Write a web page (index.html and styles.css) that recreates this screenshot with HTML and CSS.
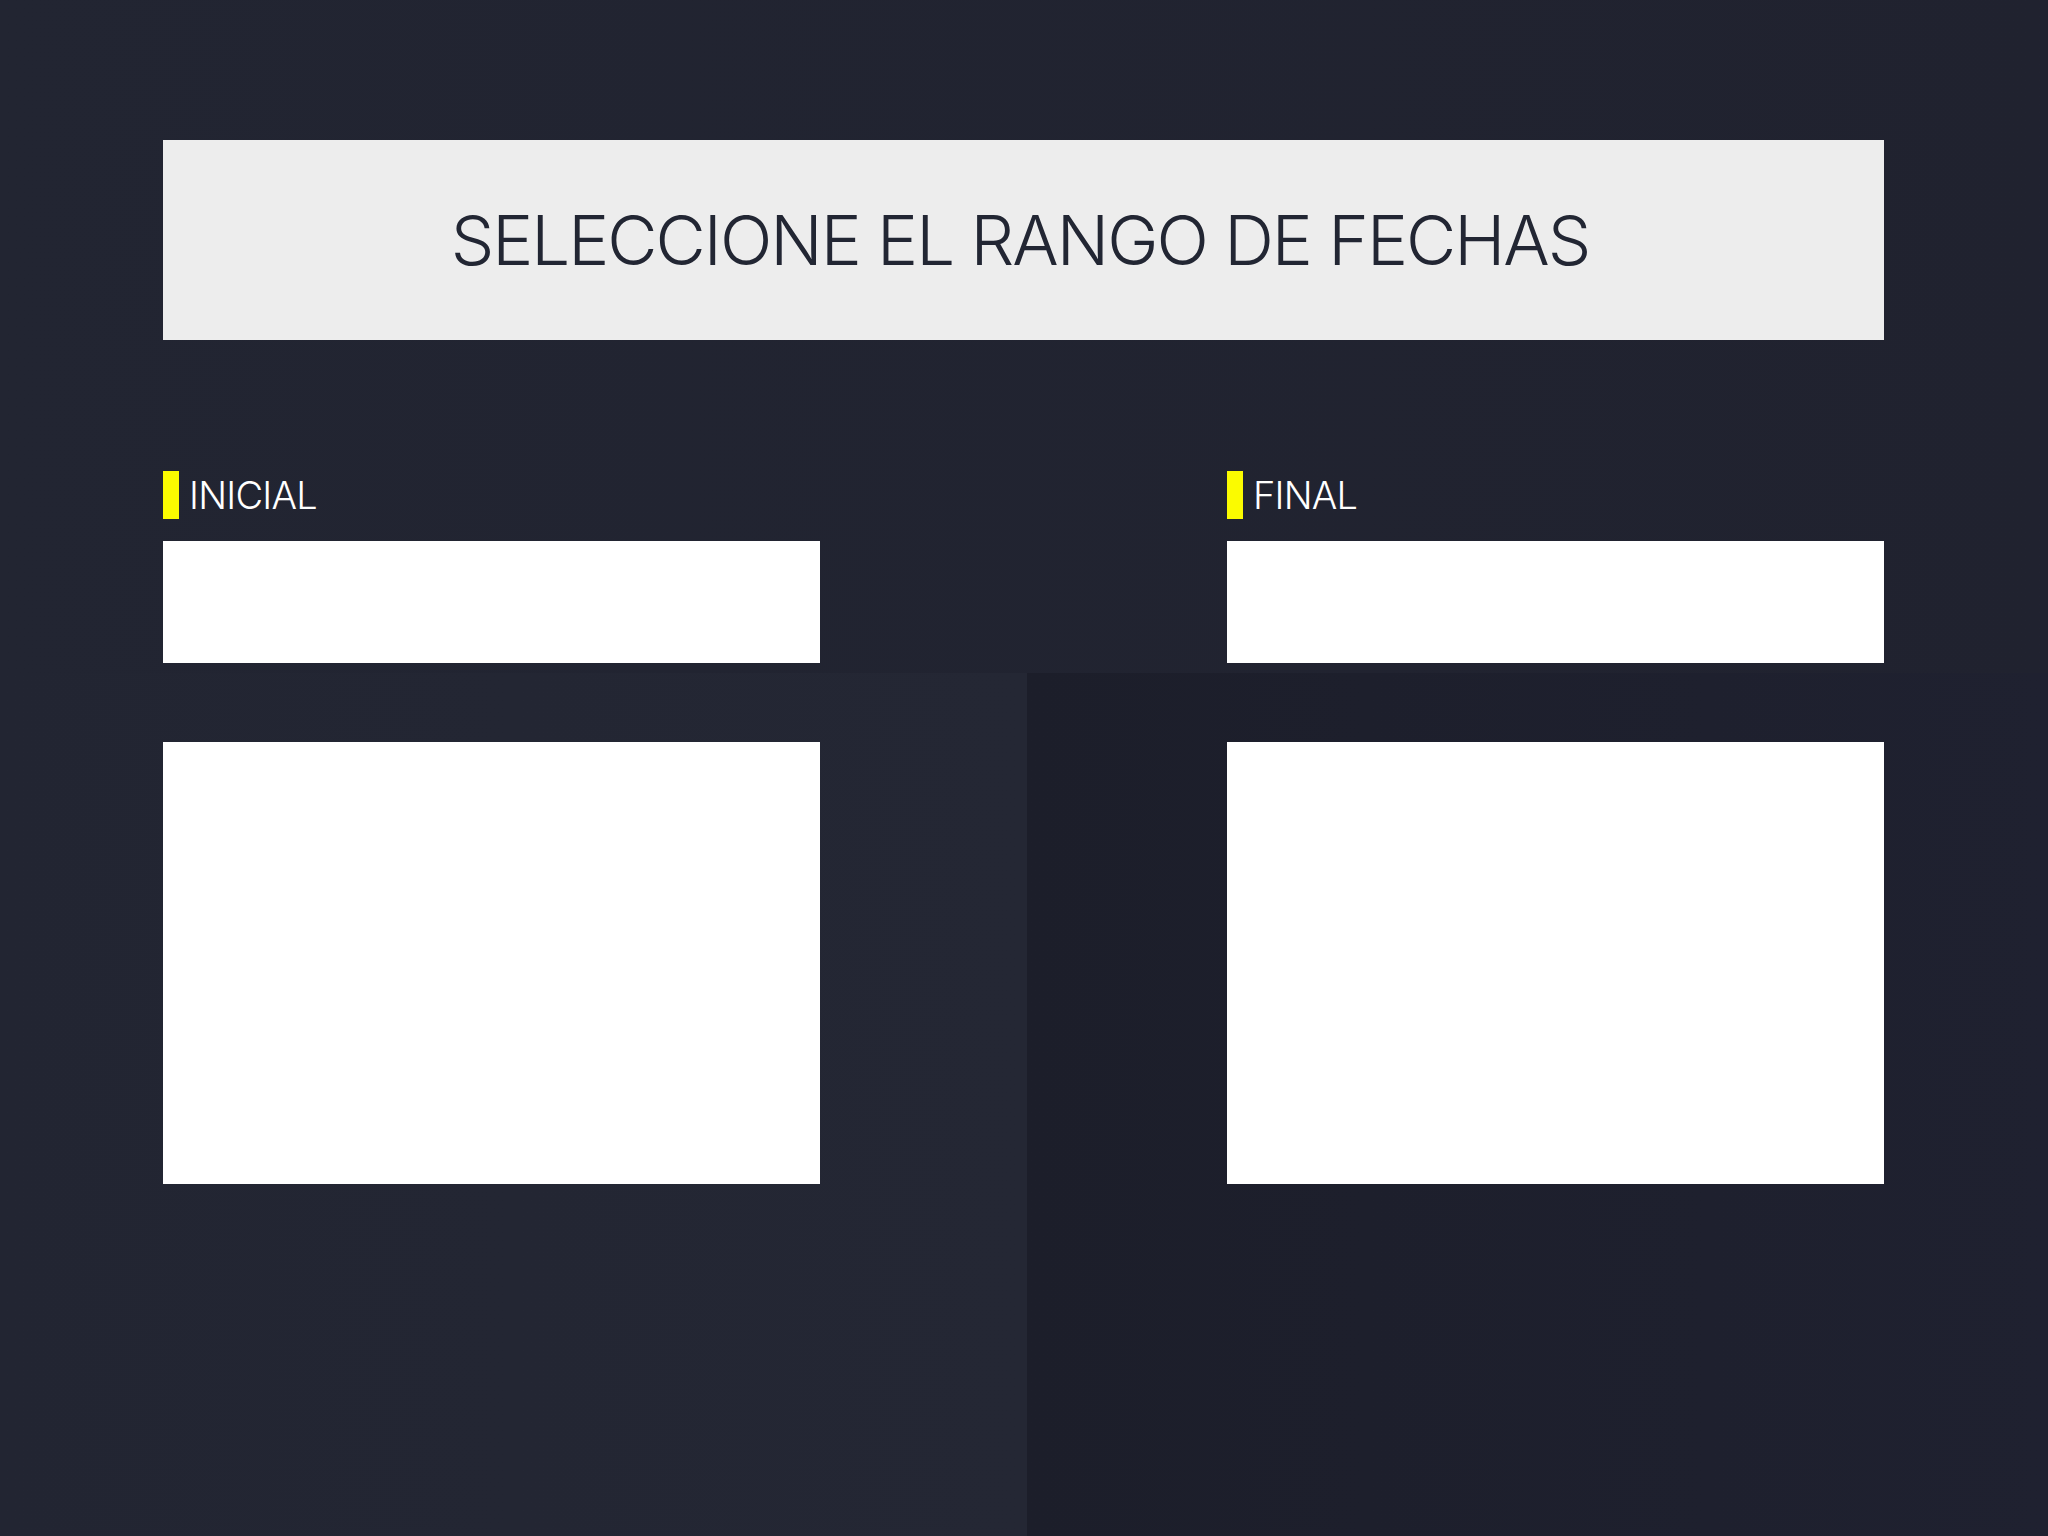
FILE: index.html
```html
<!DOCTYPE html>
<html lang="es">
<head>
<meta charset="utf-8">
<title>Seleccione el rango de fechas</title>
<link rel="stylesheet" href="styles.css">
</head>
<body>
<main class="page">
  <header class="banner">
    <h1 class="banner-title">SELECCIONE EL RANGO DE FECHAS</h1>
  </header>
  <section class="range">
    <div class="col">
      <div class="label"><span class="mark"></span><span class="label-text">INICIAL</span></div>
      <div class="field"></div>
      <div class="panel"></div>
    </div>
    <div class="col">
      <div class="label"><span class="mark"></span><span class="label-text">FINAL</span></div>
      <div class="field"></div>
      <div class="panel"></div>
    </div>
  </section>
</main>
</body>
</html>
```

FILE: styles.css
```css
html, body {
  margin: 0;
  padding: 0;
}
body {
  width: 2048px;
  height: 1536px;
  overflow: hidden;
  font-family: Inter, "Noto Sans", sans-serif;
  background-color: #212431;
  background-image:
    linear-gradient(to right, #222532 0, #242734 1027px, transparent 1027px),
    linear-gradient(to right, transparent 1027px, #1c1e2a 1027px, #1f2130 2048px),
    linear-gradient(to right, #222532 0, #20222f 2048px);
  background-size: 2048px 863px, 2048px 863px, 2048px 1536px;
  background-position: 0 673px, 0 673px, 0 0;
  background-repeat: no-repeat;
}
.page {
  padding: 140px 164px 0 163px;
}
.banner {
  height: 200px;
  background: #ededed;
  display: flex;
  align-items: center;
  justify-content: center;
}
.banner-title {
  margin: 0;
  font-weight: 300;
  font-size: 69px;
  color: #222633;
  letter-spacing: -2px;
  line-height: 1;
  padding-right: 7px;
}
.range {
  margin-top: 131px;
  display: grid;
  grid-template-columns: 657px 657px;
  column-gap: 407px;
}
.col {
  display: flex;
  flex-direction: column;
}
.label {
  display: flex;
  align-items: center;
  height: 48px;
  gap: 10px;
}
.mark {
  width: 16px;
  height: 48px;
  background: #fbfb00;
}
.label-text {
  color: #ffffff;
  font-weight: 300;
  font-size: 38px;
  line-height: 1;
  letter-spacing: -0.8px;
}
.field {
  margin-top: 22px;
  height: 122px;
  background: #ffffff;
}
.panel {
  margin-top: 79px;
  height: 442px;
  background: #ffffff;
}
```
